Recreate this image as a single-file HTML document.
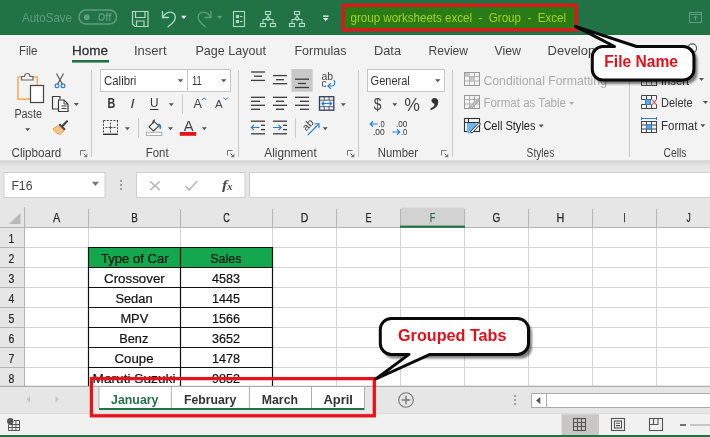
<!DOCTYPE html>
<html lang="en"><head><meta charset="utf-8"><title>group worksheets excel - Group - Excel</title>
<style>
html,body{margin:0;padding:0;background:#fff;}
body{width:710px;height:437px;overflow:hidden;font-family:"Liberation Sans", sans-serif;}
#app{position:relative;width:710px;height:437px;overflow:hidden;background:#fff;}
#app>div{position:absolute;left:0;width:710px;}
#titlebar{top:0;height:35px;background:#217346;}
#ribbon{top:35px;height:126px;background:#f3f3f3;}
#fbar{top:161px;height:47px;background:#e6e6e6;}
#grid{top:208px;height:180px;background:#fff;}
#tabs{top:388px;height:24px;background:#e6e6e6;}
#status{top:412px;height:25px;background:#f3f3f3;}
svg{position:absolute;left:0;top:0;font-family:"Liberation Sans", sans-serif;will-change:transform;}
</style></head><body>
<div id="app">
<div id="titlebar"></div><div id="ribbon"></div><div id="fbar"></div><div id="grid"></div><div id="tabs"></div><div id="status"></div>
<svg width="710" height="437" viewBox="0 0 710 437">
<defs><filter id="sh" x="-10%" y="-20%" width="120%" height="150%"><feGaussianBlur stdDeviation="1.3"/></filter><linearGradient id="rs" x1="0" y1="0" x2="0" y2="1"><stop offset="0" stop-color="#d2d2d2"/><stop offset="1" stop-color="#e6e6e6"/></linearGradient></defs>
<text x="22" y="22" font-size="13" fill="#5f9e7c" font-weight="normal" font-style="normal" textLength="50.0" lengthAdjust="spacingAndGlyphs" >AutoSave</text>
<rect x="79" y="10.100" width="37.600" height="14" rx="7" fill="none" stroke="#5f9e7c" stroke-width="1.500"/>
<circle cx="86.800" cy="17.200" r="3" fill="#5f9e7c"/>
<text x="98" y="21.3" font-size="10.5" fill="#5f9e7c" font-weight="bold" font-style="normal" textLength="13.4" lengthAdjust="spacingAndGlyphs" >Off</text>
<g fill="none" stroke="#afd9c0" stroke-width="1.2"><path d="M132.5 11.5h15.5v15h-13l-2.5-2.5z"/><path d="M135.5 11.5v6h9.5v-6"/><path d="M136.5 26.5v-5.500h7.5v5.5"/></g>
<g fill="none" stroke="#afd9c0" stroke-width="1.3" stroke-linecap="round"><path d="M162.5 11.5v6h6"/><path d="M162.8 17.2c2.500-4.500 7-6.200 10.200-4.200 3.800 2.400 2.800 7.300-1 10.500l-4 3.300"/></g>
<path d="M181 15.800h5.600l-2.800 3.200z" fill="#fff"/>
<g fill="none" stroke="#5f9e7c" stroke-width="1.3" stroke-linecap="round"><path d="M211 11.500v6h-6"/><path d="M210.700 17.200c-2.500-4.500-7-6.200-10.200-4.200-3.800 2.400-2.800 7.300 1 10.500l4 3.300"/></g>
<path d="M217 15.800h5.600l-2.800 3.200z" fill="#5f9e7c"/>
<g fill="none" stroke="#afd9c0" stroke-width="1.100"><rect x="233.500" y="11.500" width="11" height="15"/><rect x="236.500" y="15.500" width="2" height="2"/><rect x="236.500" y="20.500" width="2" height="2"/><path d="M240 16.500h2.500M240 21.500h2.500"/></g>
<g fill="none" stroke="#afd9c0" stroke-width="1.100" transform="translate(260 0)"><rect x="5.500" y="11.500" width="5" height="3"/><rect x="0.500" y="23.500" width="5" height="3"/><rect x="10.500" y="23.500" width="5" height="3"/><path d="M8 14.500v2.500M3 23.500v-4h10v4"/><path d="M8 16.500l2 2-2 2-2-2z"/></g>
<g fill="none" stroke="#afd9c0" stroke-width="1.100" transform="translate(289 0)"><rect x="5.500" y="11.500" width="5" height="3"/><rect x="0.500" y="23.500" width="5" height="3"/><rect x="10.500" y="23.500" width="5" height="3"/><path d="M8 14.500v2.500M3 23.500v-4h10v4"/><path d="M8 16.500l2 2-2 2-2-2z"/></g>
<path d="M323 15.500h5.500v1.200h-5.500zM323 18h5.500l-2.750 3z" fill="#fff"/>
<rect x="343.200" y="5.200" width="233" height="24.600" fill="#2a7b16" stroke="#e8121a" stroke-width="3.200"/>
<text x="350.5" y="22.3" font-size="13" fill="#a2d32a" font-weight="normal" font-style="normal" textLength="215.5" lengthAdjust="spacingAndGlyphs" xml:space="preserve" style="white-space:pre">group worksheets excel  -  Group  -  Excel</text>
<g fill="none" stroke="#5f9e7c" stroke-width="1"><rect x="689.500" y="12.500" width="12" height="10"/><path d="M689.500 14.500h12M695.500 16.500v4M693.500 18l2-2 2 2"/></g>
<text x="19" y="55" font-size="13.3" fill="#444" font-weight="normal" font-style="normal" textLength="18.5" lengthAdjust="spacingAndGlyphs" >File</text>
<text x="72" y="55" font-size="13.3" fill="#2e2e2e" font-weight="normal" font-style="normal" textLength="36.0" lengthAdjust="spacingAndGlyphs" stroke="#2e2e2e" stroke-width="0.280">Home</text>
<text x="134" y="55" font-size="13.3" fill="#444" font-weight="normal" font-style="normal" textLength="32.5" lengthAdjust="spacingAndGlyphs" >Insert</text>
<text x="195.5" y="55" font-size="13.3" fill="#444" font-weight="normal" font-style="normal" textLength="70.5" lengthAdjust="spacingAndGlyphs" >Page Layout</text>
<text x="294.5" y="55" font-size="13.3" fill="#444" font-weight="normal" font-style="normal" textLength="52.0" lengthAdjust="spacingAndGlyphs" >Formulas</text>
<text x="374" y="55" font-size="13.3" fill="#444" font-weight="normal" font-style="normal" textLength="27.0" lengthAdjust="spacingAndGlyphs" >Data</text>
<text x="428.5" y="55" font-size="13.3" fill="#444" font-weight="normal" font-style="normal" textLength="39.5" lengthAdjust="spacingAndGlyphs" >Review</text>
<text x="494.5" y="55" font-size="13.3" fill="#444" font-weight="normal" font-style="normal" textLength="26.5" lengthAdjust="spacingAndGlyphs" >View</text>
<text x="547.5" y="55" font-size="13.3" fill="#444" font-weight="normal" font-style="normal" textLength="59.3" lengthAdjust="spacingAndGlyphs" >Developer</text>
<rect x="72" y="60" width="37" height="2.600" fill="#217346"/>
<g fill="none" stroke="#555" stroke-width="1.100"><circle cx="692.300" cy="48.200" r="4.300"/><path d="M689.300 51.500l-3.500 4"/></g>
<path d="M91.5 70v87" stroke="#c8c8c8" stroke-width="1"/>
<path d="M238.5 70v87" stroke="#c8c8c8" stroke-width="1"/>
<path d="M358.5 70v87" stroke="#c8c8c8" stroke-width="1"/>
<path d="M452.5 70v87" stroke="#c8c8c8" stroke-width="1"/>
<path d="M629.5 70v87" stroke="#c8c8c8" stroke-width="1"/>
<text x="11.5" y="156.5" font-size="12" fill="#444" font-weight="normal" font-style="normal" textLength="49.8" lengthAdjust="spacingAndGlyphs" >Clipboard</text>
<text x="145.8" y="156.5" font-size="12" fill="#444" font-weight="normal" font-style="normal" textLength="22.8" lengthAdjust="spacingAndGlyphs" >Font</text>
<text x="264.3" y="156.5" font-size="12" fill="#444" font-weight="normal" font-style="normal" textLength="52.4" lengthAdjust="spacingAndGlyphs" >Alignment</text>
<text x="377.8" y="156.5" font-size="12" fill="#444" font-weight="normal" font-style="normal" textLength="40.2" lengthAdjust="spacingAndGlyphs" >Number</text>
<text x="526.6" y="156.5" font-size="12" fill="#444" font-weight="normal" font-style="normal" textLength="27.7" lengthAdjust="spacingAndGlyphs" >Styles</text>
<text x="663.4" y="156.5" font-size="12" fill="#444" font-weight="normal" font-style="normal" textLength="23.1" lengthAdjust="spacingAndGlyphs" >Cells</text>
<g fill="none" stroke="#777" stroke-width="1"><path d="M80.5 155.5v-5h5"/><path d="M83.5 153.5l3.500 3.500"/></g><path d="M87.3 153.7v3.600h-3.600z" fill="#777"/>
<g fill="none" stroke="#777" stroke-width="1"><path d="M227.5 155.5v-5h5"/><path d="M230.5 153.5l3.500 3.500"/></g><path d="M234.3 153.7v3.600h-3.600z" fill="#777"/>
<g fill="none" stroke="#777" stroke-width="1"><path d="M347.5 155.5v-5h5"/><path d="M350.5 153.5l3.500 3.500"/></g><path d="M354.3 153.7v3.600h-3.600z" fill="#777"/>
<g fill="none" stroke="#777" stroke-width="1"><path d="M441.5 155.5v-5h5"/><path d="M444.5 153.5l3.500 3.500"/></g><path d="M448.3 153.7v3.600h-3.600z" fill="#777"/>
<g fill="none" stroke-width="1.200"><path d="M30 99.200h-12v-22.200h4" stroke="#f0b463" stroke-width="1.700"/><path d="M33 77h4.300v8" stroke="#f0b463" stroke-width="1.700"/><path d="M21.500 80v-3.500h3c0-4 5.500-4 5.500 0h3v3.500z" stroke="#666" fill="#f3f3f3"/><rect x="30.500" y="85.500" width="13" height="17" fill="#fff" stroke="#444"/></g>
<text x="14.4" y="118" font-size="12" fill="#444" font-weight="normal" font-style="normal" textLength="27.6" lengthAdjust="spacingAndGlyphs" >Paste</text>
<path d="M25.2 128.3h5l-2.5 3z" fill="#555"/>
<g fill="none" stroke-width="1.200"><path d="M56.500 73.500l6 11M63.500 73.500l-6 11" stroke="#555"/><circle cx="57" cy="85.800" r="1.900" stroke="#2a7fd0"/><circle cx="63" cy="85.800" r="1.900" stroke="#2a7fd0"/></g>
<g fill="none" stroke="#3c3c3c" stroke-width="1.200"><path d="M58.500 109h-6v-12.500h7.500v3"/><path d="M58.500 100h5.500l4 4v7.500h-9.500z" fill="#f8f8f8"/><path d="M64 100v4h4" stroke-width="0.900"/><path d="M61.500 106h5M61.500 108.500h5" stroke-width="1"/></g>
<path d="M73.8 103h5l-2.5 3z" fill="#555"/>
<g stroke-width="1.200" fill="none"><path d="M67 121.300l-4.300 4.500" stroke="#444" stroke-width="2.200" stroke-linecap="round"/><path d="M59.300 124.300l5.700 5.400" stroke="#444" stroke-width="2"/><path d="M58 125.500l6 5.500-3.800 3.300c-3-0.300-5.800-2.300-7.200-5.500z" fill="#f4c58a" stroke="#ec9f45" stroke-width="1"/></g>
<rect x="100.500" y="69.500" width="87" height="22" fill="#fff" stroke="#c6c6c6"/><rect x="187.500" y="69.500" width="43" height="22" fill="#fff" stroke="#c6c6c6"/>
<text x="104" y="85" font-size="12" fill="#333" font-weight="normal" font-style="normal" textLength="32.4" lengthAdjust="spacingAndGlyphs" >Calibri</text>
<path d="M177.7 79.2h5.5l-2.75 3z" fill="#555"/>
<text x="192" y="85" font-size="12" fill="#333" font-weight="normal" font-style="normal" textLength="9.8" lengthAdjust="spacingAndGlyphs" >11</text>
<path d="M221 79.2h5.5l-2.75 3z" fill="#555"/>
<text x="107.5" y="107.8" font-size="14" fill="#333" font-weight="bold" font-style="normal" textLength="7.8" lengthAdjust="spacingAndGlyphs" >B</text>
<text x="130.5" y="107.5" font-size="13" fill="#333" font-weight="normal" font-style="italic" textLength="4.0" lengthAdjust="spacingAndGlyphs" >I</text>
<text x="150" y="107" font-size="12.5" fill="#333" font-weight="normal" font-style="normal" textLength="8.5" lengthAdjust="spacingAndGlyphs" >U</text>
<path d="M150 109.500h8.500" stroke="#333" stroke-width="1"/>
<path d="M168.8 103.3h5l-2.5 3z" fill="#555"/>
<path d="M182.500 95v19" stroke="#c8c8c8"/>
<text x="193.4" y="107.5" font-size="12.5" fill="#444" font-weight="normal" font-style="normal" textLength="8.4" lengthAdjust="spacingAndGlyphs" >A</text>
<path d="M201.800 100l2.300-2.300 2.300 2.300" fill="none" stroke="#2a7fd0" stroke-width="1"/>
<text x="215" y="107.5" font-size="10.5" fill="#444" font-weight="normal" font-style="normal" textLength="7.7" lengthAdjust="spacingAndGlyphs" >A</text>
<path d="M223.300 97.500l2.300 2.300 2.300-2.300" fill="none" stroke="#2a7fd0" stroke-width="1"/>
<g fill="none" stroke="#444" stroke-width="1" stroke-dasharray="2 1.300"><path d="M103.500 120.500h14.500M103.500 120.500v13M117.500 120.500v13"/></g><path d="M110.500 122.500v2M110.500 125.500v4M110.500 130.500v2M105.500 127.500h2M108.500 127.500h4M113.500 127.500h2" stroke="#555" stroke-width="1"/><path d="M103 134.300h15" stroke="#333" stroke-width="1.400"/>
<path d="M124.9 127.3h5l-2.5 3z" fill="#555"/>
<path d="M138.500 118v20" stroke="#c8c8c8"/>
<g fill="none" stroke-width="1.100"><path d="M149 127l5.200-5.400 4.500 4.300-5.100 5.100z" stroke="#444" fill="#fafafa"/><path d="M153.200 123.500c-1-2 0.500-3.800 1.800-3.300" stroke="#444"/><path d="M158.500 124c1.800 1 2.200 2.800 1.600 4.800" stroke="#2a7fd0" stroke-width="1.800"/></g><rect x="146.500" y="132.200" width="15.300" height="3.300" fill="#fff" stroke="#999" stroke-width="0.800"/>
<path d="M168 127.3h5l-2.5 3z" fill="#555"/>
<text x="183.8" y="130.5" font-size="15" fill="#444" font-weight="normal" font-style="normal" textLength="9.8" lengthAdjust="spacingAndGlyphs" >A</text>
<rect x="179.800" y="132" width="16.400" height="3.800" fill="#e8111a"/>
<path d="M201.8 127.3h5l-2.5 3z" fill="#555"/>
<path d="M251 72H265" stroke="#3c3c3c" stroke-width="1.3"/>
<path d="M254 76.2H262" stroke="#3c3c3c" stroke-width="1.3"/>
<path d="M251 80.4H265" stroke="#3c3c3c" stroke-width="1.3"/>
<path d="M273 75.6H287" stroke="#3c3c3c" stroke-width="1.3"/>
<path d="M276 79.7H284" stroke="#3c3c3c" stroke-width="1.3"/>
<path d="M273 83.7H287" stroke="#3c3c3c" stroke-width="1.3"/>
<rect x="291.500" y="69" width="21.200" height="22.700" fill="#c8c8c8"/>
<path d="M295 79.2H309" stroke="#3c3c3c" stroke-width="1.3"/>
<path d="M298 83.5H306" stroke="#3c3c3c" stroke-width="1.3"/>
<path d="M295 87.5H309" stroke="#3c3c3c" stroke-width="1.3"/>
<text x="321.4" y="79.8" font-size="10.5" fill="#444" font-weight="normal" font-style="normal" textLength="11.6" lengthAdjust="spacingAndGlyphs" >ab</text>
<text x="321.4" y="87" font-size="10.5" fill="#444" font-weight="normal" font-style="normal" textLength="5.1" lengthAdjust="spacingAndGlyphs" >c</text>
<g fill="none" stroke="#2a7fd0" stroke-width="1.200"><path d="M334 80c1.800 3 0.500 6-2.500 6h-3.500"/><path d="M330.800 83.200l-2.900 2.800 2.900 2.800"/></g>
<path d="M251 97.3H265" stroke="#3c3c3c" stroke-width="1.3"/>
<path d="M273 97.3H287" stroke="#3c3c3c" stroke-width="1.3"/>
<path d="M295 97.3H309" stroke="#3c3c3c" stroke-width="1.3"/>
<path d="M251 101.3H260" stroke="#3c3c3c" stroke-width="1.3"/>
<path d="M276 101.3H284" stroke="#3c3c3c" stroke-width="1.3"/>
<path d="M300 101.3H309" stroke="#3c3c3c" stroke-width="1.3"/>
<path d="M251 105.3H265" stroke="#3c3c3c" stroke-width="1.3"/>
<path d="M273 105.3H287" stroke="#3c3c3c" stroke-width="1.3"/>
<path d="M295 105.3H309" stroke="#3c3c3c" stroke-width="1.3"/>
<path d="M251 109.3H260" stroke="#3c3c3c" stroke-width="1.3"/>
<path d="M276 109.3H284" stroke="#3c3c3c" stroke-width="1.3"/>
<path d="M300 109.3H309" stroke="#3c3c3c" stroke-width="1.3"/>
<g fill="none"><rect x="319.500" y="96.700" width="14.300" height="13.500" stroke="#2f3f55" stroke-width="1.300"/><path d="M319.500 100.200h14.300M319.500 106.700h14.300M324.300 96.700v3.500M329 96.700v3.500M324.300 106.700v3.500M329 106.700v3.500" stroke="#2f3f55" stroke-width="0.800"/><path d="M322 103.500h9.500M324 101.500l-2 2 2 2M329.500 101.500l2 2-2 2" stroke="#2a7fd0" stroke-width="1.200"/></g>
<path d="M340.8 103.3h5l-2.5 3z" fill="#555"/>
<path d="M251 121.2H265" stroke="#3c3c3c" stroke-width="1.3"/>
<path d="M273 121.2H287" stroke="#3c3c3c" stroke-width="1.3"/>
<path d="M261 125.3H265" stroke="#3c3c3c" stroke-width="1.3"/>
<path d="M283 125.3H287" stroke="#3c3c3c" stroke-width="1.3"/>
<path d="M261 129.6H265" stroke="#3c3c3c" stroke-width="1.3"/>
<path d="M283 129.6H287" stroke="#3c3c3c" stroke-width="1.3"/>
<path d="M251 133.8H265" stroke="#3c3c3c" stroke-width="1.3"/>
<path d="M273 133.8H287" stroke="#3c3c3c" stroke-width="1.3"/>
<g fill="none" stroke="#2a7fd0" stroke-width="1.200"><path d="M251.300 127.500h8.200M254 124.800l-2.700 2.700 2.700 2.700"/><path d="M273 127.500h8.200M278.500 124.800l2.700 2.700-2.700 2.700"/></g>
<path d="M295.500 118v20" stroke="#c8c8c8"/>
<text x="0" y="0" font-size="10.500" fill="#444" transform="translate(306.200 131.500) rotate(-45)">ab</text>
<g fill="none" stroke="#2a7fd0" stroke-width="1.100"><path d="M307.800 135l11-11"/><path d="M314.500 123.700h4.500v4.500"/></g>
<path d="M322.7 127.3h5l-2.5 3z" fill="#555"/>
<rect x="367.500" y="69.500" width="77" height="22" fill="#fff" stroke="#c6c6c6"/>
<text x="370.6" y="85" font-size="12" fill="#333" font-weight="normal" font-style="normal" textLength="39.2" lengthAdjust="spacingAndGlyphs" >General</text>
<path d="M435 79.2h5.5l-2.75 3z" fill="#555"/>
<text x="373.7" y="110" font-size="17" fill="#444" font-weight="normal" font-style="normal" textLength="7.7" lengthAdjust="spacingAndGlyphs" >$</text>
<path d="M392.3 103.3h5l-2.5 3z" fill="#555"/>
<text x="404.3" y="110.5" font-size="18" fill="#444" font-weight="normal" font-style="normal" textLength="15.7" lengthAdjust="spacingAndGlyphs" >%</text>
<text x="430" y="104.2" font-size="39" fill="#333" font-weight="bold" font-style="normal" font-family="Liberation Serif, serif">,</text>
<text x="378.5" y="126.6" font-size="8.5" fill="#333" font-weight="normal" font-style="normal" textLength="6.3" lengthAdjust="spacingAndGlyphs" >.0</text>
<text x="373" y="134.7" font-size="8.5" fill="#333" font-weight="normal" font-style="normal" textLength="11.8" lengthAdjust="spacingAndGlyphs" >.00</text>
<g fill="none" stroke="#2a7fd0" stroke-width="1.200"><path d="M370.200 124h7.500M373 121.300l-2.800 2.700 2.800 2.700"/></g>
<text x="396" y="126.6" font-size="8.5" fill="#333" font-weight="normal" font-style="normal" textLength="11.3" lengthAdjust="spacingAndGlyphs" >.00</text>
<text x="401" y="134.7" font-size="8.5" fill="#333" font-weight="normal" font-style="normal" textLength="6.3" lengthAdjust="spacingAndGlyphs" >.0</text>
<g fill="none" stroke="#2a7fd0" stroke-width="1.200"><path d="M392.300 132h7.500M397 129.300l2.800 2.700-2.800 2.700"/></g>
<g fill="none" stroke="#999" stroke-width="1"><rect x="464.5" y="72.5" width="15" height="13"/><path d="M464.5 76.5h15M464.5 81h15M469.5 72.5v13M474.5 72.5v13" stroke-opacity="0.7"/></g>
<rect x="465" y="73" width="5" height="4" fill="#c4c4c4"/><rect x="470" y="77" width="5" height="4" fill="#c4c4c4"/>
<g fill="none" stroke="#999" stroke-width="1"><rect x="464.5" y="95.5" width="15" height="13"/><path d="M464.5 99.5h15M464.5 104h15M469.5 95.5v13M474.5 95.5v13" stroke-opacity="0.7"/></g>
<path d="M468.500 108l9.500-9.500 1.800 1.800-8.500 8.500z" fill="#bdbdbd" stroke="#999" stroke-width="0.700"/>
<g fill="none" stroke="#333" stroke-width="1.100"><rect x="464.500" y="118.500" width="15" height="13"/><path d="M464.500 122.500h15M468.500 118.500v13"/></g><path d="M467 123h9.500l-1 5.500-4 5h-3c-1.500-0.500-1.500-2-1.500-3z" fill="#6db6f2"/><path d="M470.500 131.500l8.500-9 1.500 1.500-8.500 9z" fill="#e8f2fb" stroke="#333" stroke-width="1"/>
<text x="483.4" y="84.5" font-size="12" fill="#ababab" font-weight="normal" font-style="normal" textLength="123.6" lengthAdjust="spacingAndGlyphs" >Conditional Formatting</text>
<text x="483.4" y="107" font-size="12" fill="#ababab" font-weight="normal" font-style="normal" textLength="82.6" lengthAdjust="spacingAndGlyphs" >Format as Table</text>
<path d="M569.2 102h5l-2.5 3z" fill="#ababab"/>
<text x="483.4" y="130" font-size="12" fill="#222" font-weight="normal" font-style="normal" textLength="52.1" lengthAdjust="spacingAndGlyphs" >Cell Styles</text>
<path d="M538.7 124.4h5l-2.5 3z" fill="#555"/>
<g fill="none" stroke="#444" stroke-width="1"><rect x="641.5" y="72.5" width="15" height="13"/><path d="M641.5 76.5h15M641.5 81h15M646.5 72.5v13M651.5 72.5v13" stroke-opacity="0.7"/></g>
<text x="661" y="84.5" font-size="12" fill="#333" font-weight="normal" font-style="normal" textLength="28.0" lengthAdjust="spacingAndGlyphs" >Insert</text>
<path d="M699 78h5l-2.5 3z" fill="#555"/>
<g fill="none" stroke="#444" stroke-width="1"><path d="M641.500 99.500v-4h15v4M641.500 104.500v4h15v-4M646.500 95.500v4M651.500 95.500v4M646.500 104.500v4M651.500 104.500v4M641.500 99.500h4M641.500 104.500h4"/><rect x="645.500" y="99.500" width="5" height="5" fill="#5aa7e6" stroke="#2a7fd0"/><path d="M652 99.500l4.500 5.500M656.500 99.500l-4.500 5.500" stroke="#e0452b" stroke-width="1.100"/></g>
<text x="661" y="107" font-size="12" fill="#333" font-weight="normal" font-style="normal" textLength="31.7" lengthAdjust="spacingAndGlyphs" >Delete</text>
<path d="M703 101h5l-2.5 3z" fill="#555"/>
<g fill="none" stroke="#444" stroke-width="1"><rect x="641.500" y="121.500" width="15" height="11"/><path d="M641.500 125h15M641.500 129h15M646.500 121.500v11M651.500 121.500v11"/><rect x="646.500" y="125" width="5" height="4" fill="#5aa7e6" stroke="#2a7fd0"/><path d="M641.500 118.500h15M641.500 117v3M656.500 117v3" stroke="#2a7fd0"/></g>
<text x="661" y="130" font-size="12" fill="#333" font-weight="normal" font-style="normal" textLength="36.4" lengthAdjust="spacingAndGlyphs" >Format</text>
<path d="M700.4 124.3h5l-2.5 3z" fill="#555"/>
<rect x="0" y="160.300" width="710" height="5.500" fill="url(#rs)"/>
<rect x="4" y="172.500" width="101" height="25" fill="#fff" stroke="#cfcfcf" stroke-width="1"/>
<text x="11.4" y="190" font-size="13" fill="#444" font-weight="normal" font-style="normal" textLength="21.1" lengthAdjust="spacingAndGlyphs" >F16</text>
<path d="M91.800 181.800h7.200l-3.600 4.200z" fill="#777"/>
<rect x="120.200" y="180" width="1.800" height="1.800" fill="#8e8e8e"/>
<rect x="120.200" y="184.1" width="1.800" height="1.800" fill="#8e8e8e"/>
<rect x="120.200" y="188.1" width="1.800" height="1.800" fill="#8e8e8e"/>
<rect x="136.500" y="172.500" width="108.500" height="25" fill="#fff" stroke="#cfcfcf" stroke-width="1"/>
<path d="M150.200 181.300l9.600 8.800M159.800 181.300l-9.600 8.800" stroke="#bcbcbc" stroke-width="1.700" fill="none"/>
<path d="M185.500 186.200l3.800 3.800 7.700-9" stroke="#bcbcbc" stroke-width="1.800" fill="none"/>
<text x="222" y="188.5" font-size="13.5" fill="#4a4a4a" font-weight="bold" font-style="italic" textLength="5.5" lengthAdjust="spacingAndGlyphs" font-family="Liberation Serif, serif">f</text>
<text x="227.3" y="189.5" font-size="9.5" fill="#4a4a4a" font-weight="bold" font-style="italic" textLength="5.3" lengthAdjust="spacingAndGlyphs" font-family="Liberation Serif, serif">x</text>
<rect x="249.500" y="172.500" width="470" height="25" fill="#fff" stroke="#cfcfcf" stroke-width="1"/>
<rect x="0" y="207" width="710" height="20.500" fill="#e6e6e6"/>
<rect x="0" y="207" width="24.500" height="179.500" fill="#e6e6e6"/>
<path d="M88.5 228V386" stroke="#d4d4d4" stroke-width="1"/>
<path d="M88.5 209V227" stroke="#b4b4b4" stroke-width="1"/>
<path d="M180.5 228V386" stroke="#d4d4d4" stroke-width="1"/>
<path d="M180.5 209V227" stroke="#b4b4b4" stroke-width="1"/>
<path d="M272.5 228V386" stroke="#d4d4d4" stroke-width="1"/>
<path d="M272.5 209V227" stroke="#b4b4b4" stroke-width="1"/>
<path d="M336.5 228V386" stroke="#d4d4d4" stroke-width="1"/>
<path d="M336.5 209V227" stroke="#b4b4b4" stroke-width="1"/>
<path d="M400.5 228V386" stroke="#d4d4d4" stroke-width="1"/>
<path d="M400.5 209V227" stroke="#b4b4b4" stroke-width="1"/>
<path d="M464.5 228V386" stroke="#d4d4d4" stroke-width="1"/>
<path d="M464.5 209V227" stroke="#b4b4b4" stroke-width="1"/>
<path d="M528.5 228V386" stroke="#d4d4d4" stroke-width="1"/>
<path d="M528.5 209V227" stroke="#b4b4b4" stroke-width="1"/>
<path d="M592.5 228V386" stroke="#d4d4d4" stroke-width="1"/>
<path d="M592.5 209V227" stroke="#b4b4b4" stroke-width="1"/>
<path d="M656.5 228V386" stroke="#d4d4d4" stroke-width="1"/>
<path d="M656.5 209V227" stroke="#b4b4b4" stroke-width="1"/>
<path d="M24.500 247.5H710" stroke="#d4d4d4" stroke-width="1"/>
<path d="M0 247.5H24.500" stroke="#b4b4b4" stroke-width="1"/>
<path d="M24.500 267.5H710" stroke="#d4d4d4" stroke-width="1"/>
<path d="M0 267.5H24.500" stroke="#b4b4b4" stroke-width="1"/>
<path d="M24.500 287.5H710" stroke="#d4d4d4" stroke-width="1"/>
<path d="M0 287.5H24.500" stroke="#b4b4b4" stroke-width="1"/>
<path d="M24.500 307.5H710" stroke="#d4d4d4" stroke-width="1"/>
<path d="M0 307.5H24.500" stroke="#b4b4b4" stroke-width="1"/>
<path d="M24.500 327.5H710" stroke="#d4d4d4" stroke-width="1"/>
<path d="M0 327.5H24.500" stroke="#b4b4b4" stroke-width="1"/>
<path d="M24.500 347.5H710" stroke="#d4d4d4" stroke-width="1"/>
<path d="M0 347.5H24.500" stroke="#b4b4b4" stroke-width="1"/>
<path d="M24.500 367.5H710" stroke="#d4d4d4" stroke-width="1"/>
<path d="M0 367.5H24.500" stroke="#b4b4b4" stroke-width="1"/>
<path d="M0 227.500H710" stroke="#b4b4b4" stroke-width="1"/>
<path d="M24.500 207V386" stroke="#b4b4b4" stroke-width="1"/>
<path d="M20.500 213v11h-11.500z" fill="#b8b8b8"/>
<rect x="401" y="207.500" width="63" height="18.500" fill="#d2d2d2"/><rect x="400" y="225.600" width="65" height="2.200" fill="#217346"/>
<text x="52.9" y="221.7" font-size="12.5" fill="#262626" font-weight="normal" font-style="normal" textLength="7.2" lengthAdjust="spacingAndGlyphs" stroke="#262626" stroke-width="0.250">A</text>
<text x="131.2" y="221.7" font-size="12.5" fill="#262626" font-weight="normal" font-style="normal" textLength="6.6" lengthAdjust="spacingAndGlyphs" stroke="#262626" stroke-width="0.250">B</text>
<text x="223.2" y="221.7" font-size="12.5" fill="#262626" font-weight="normal" font-style="normal" textLength="6.6" lengthAdjust="spacingAndGlyphs" stroke="#262626" stroke-width="0.250">C</text>
<text x="300.7" y="221.7" font-size="12.5" fill="#262626" font-weight="normal" font-style="normal" textLength="7.6" lengthAdjust="spacingAndGlyphs" stroke="#262626" stroke-width="0.250">D</text>
<text x="365.5" y="221.7" font-size="12.5" fill="#262626" font-weight="normal" font-style="normal" textLength="6.0" lengthAdjust="spacingAndGlyphs" stroke="#262626" stroke-width="0.250">E</text>
<text x="429.7" y="221.7" font-size="12.5" fill="#217346" font-weight="normal" font-style="normal" textLength="5.6" lengthAdjust="spacingAndGlyphs" stroke="#217346" stroke-width="0.250">F</text>
<text x="492.6" y="221.7" font-size="12.5" fill="#262626" font-weight="normal" font-style="normal" textLength="7.8" lengthAdjust="spacingAndGlyphs" stroke="#262626" stroke-width="0.250">G</text>
<text x="556.6" y="221.7" font-size="12.5" fill="#262626" font-weight="normal" font-style="normal" textLength="7.8" lengthAdjust="spacingAndGlyphs" stroke="#262626" stroke-width="0.250">H</text>
<text x="623.4" y="221.7" font-size="12.5" fill="#262626" font-weight="normal" font-style="normal" textLength="2.2" lengthAdjust="spacingAndGlyphs" stroke="#262626" stroke-width="0.250">I</text>
<text x="686.4" y="221.7" font-size="12.5" fill="#262626" font-weight="normal" font-style="normal" textLength="4.2" lengthAdjust="spacingAndGlyphs" stroke="#262626" stroke-width="0.250">J</text>
<text x="8.6" y="242.7" font-size="12.5" fill="#262626" font-weight="normal" font-style="normal" textLength="5.8" lengthAdjust="spacingAndGlyphs" stroke="#262626" stroke-width="0.200">1</text>
<text x="8.6" y="262.7" font-size="12.5" fill="#262626" font-weight="normal" font-style="normal" textLength="5.8" lengthAdjust="spacingAndGlyphs" stroke="#262626" stroke-width="0.200">2</text>
<text x="8.6" y="282.7" font-size="12.5" fill="#262626" font-weight="normal" font-style="normal" textLength="5.8" lengthAdjust="spacingAndGlyphs" stroke="#262626" stroke-width="0.200">3</text>
<text x="8.6" y="302.7" font-size="12.5" fill="#262626" font-weight="normal" font-style="normal" textLength="5.8" lengthAdjust="spacingAndGlyphs" stroke="#262626" stroke-width="0.200">4</text>
<text x="8.6" y="322.7" font-size="12.5" fill="#262626" font-weight="normal" font-style="normal" textLength="5.8" lengthAdjust="spacingAndGlyphs" stroke="#262626" stroke-width="0.200">5</text>
<text x="8.6" y="342.7" font-size="12.5" fill="#262626" font-weight="normal" font-style="normal" textLength="5.8" lengthAdjust="spacingAndGlyphs" stroke="#262626" stroke-width="0.200">6</text>
<text x="8.6" y="362.7" font-size="12.5" fill="#262626" font-weight="normal" font-style="normal" textLength="5.8" lengthAdjust="spacingAndGlyphs" stroke="#262626" stroke-width="0.200">7</text>
<text x="8.6" y="382.7" font-size="12.5" fill="#262626" font-weight="normal" font-style="normal" textLength="5.8" lengthAdjust="spacingAndGlyphs" stroke="#262626" stroke-width="0.200">8</text>
<rect x="88.500" y="247.500" width="184" height="20" fill="#14a84e"/>
<path d="M88 247.5H273" stroke="#111" stroke-width="1.100"/>
<path d="M88 267.5H273" stroke="#111" stroke-width="1.100"/>
<path d="M88 287.5H273" stroke="#111" stroke-width="1.100"/>
<path d="M88 307.5H273" stroke="#111" stroke-width="1.100"/>
<path d="M88 327.5H273" stroke="#111" stroke-width="1.100"/>
<path d="M88 347.5H273" stroke="#111" stroke-width="1.100"/>
<path d="M88 367.5H273" stroke="#111" stroke-width="1.100"/>
<path d="M88.5 247V386" stroke="#111" stroke-width="1.200"/>
<path d="M180.5 247V386" stroke="#111" stroke-width="1.200"/>
<path d="M272.5 247V386" stroke="#111" stroke-width="1.200"/>
<text x="100.9" y="262.5" font-size="12.5" fill="#111" font-weight="normal" font-style="normal" textLength="67.7" lengthAdjust="spacingAndGlyphs" stroke="#111" stroke-width="0.200">Type of Car</text>
<text x="210.3" y="262.5" font-size="12.5" fill="#111" font-weight="normal" font-style="normal" textLength="31.2" lengthAdjust="spacingAndGlyphs" stroke="#111" stroke-width="0.200">Sales</text>
<text x="104" y="282.5" font-size="12.5" fill="#111" font-weight="normal" font-style="normal" textLength="60.8" lengthAdjust="spacingAndGlyphs" stroke="#111" stroke-width="0.200">Crossover</text>
<text x="212" y="282.5" font-size="12.5" fill="#111" font-weight="normal" font-style="normal" textLength="28.0" lengthAdjust="spacingAndGlyphs" stroke="#111" stroke-width="0.200">4583</text>
<text x="115.4" y="302.5" font-size="12.5" fill="#111" font-weight="normal" font-style="normal" textLength="37.2" lengthAdjust="spacingAndGlyphs" stroke="#111" stroke-width="0.200">Sedan</text>
<text x="212" y="302.5" font-size="12.5" fill="#111" font-weight="normal" font-style="normal" textLength="28.0" lengthAdjust="spacingAndGlyphs" stroke="#111" stroke-width="0.200">1445</text>
<text x="120.4" y="322.5" font-size="12.5" fill="#111" font-weight="normal" font-style="normal" textLength="27.9" lengthAdjust="spacingAndGlyphs" stroke="#111" stroke-width="0.200">MPV</text>
<text x="212" y="322.5" font-size="12.5" fill="#111" font-weight="normal" font-style="normal" textLength="28.0" lengthAdjust="spacingAndGlyphs" stroke="#111" stroke-width="0.200">1566</text>
<text x="119.2" y="342.5" font-size="12.5" fill="#111" font-weight="normal" font-style="normal" textLength="29.1" lengthAdjust="spacingAndGlyphs" stroke="#111" stroke-width="0.200">Benz</text>
<text x="212" y="342.5" font-size="12.5" fill="#111" font-weight="normal" font-style="normal" textLength="28.0" lengthAdjust="spacingAndGlyphs" stroke="#111" stroke-width="0.200">3652</text>
<text x="114.5" y="362.5" font-size="12.5" fill="#111" font-weight="normal" font-style="normal" textLength="39.0" lengthAdjust="spacingAndGlyphs" stroke="#111" stroke-width="0.200">Coupe</text>
<text x="212" y="362.5" font-size="12.5" fill="#111" font-weight="normal" font-style="normal" textLength="28.0" lengthAdjust="spacingAndGlyphs" stroke="#111" stroke-width="0.200">1478</text>
<text x="92.5" y="382.5" font-size="12.5" fill="#111" font-weight="normal" font-style="normal" textLength="83.0" lengthAdjust="spacingAndGlyphs" stroke="#111" stroke-width="0.200">Maruti Suzuki</text>
<text x="212" y="382.5" font-size="12.5" fill="#111" font-weight="normal" font-style="normal" textLength="28.0" lengthAdjust="spacingAndGlyphs" stroke="#111" stroke-width="0.200">9852</text>
<rect x="0" y="386" width="710" height="28.500" fill="#e6e6e6"/>
<path d="M0 386.300H710" stroke="#9e9e9e"/><path d="M0 413.800H710" stroke="#d6d6d6"/>
<path d="M30 396v6.500l-3.500-3.250z" fill="#c4c4c4"/><path d="M55.500 396v6.500l3.500-3.250z" fill="#c4c4c4"/>
<rect x="99" y="387" width="265.500" height="21.500" fill="#fff"/>
<rect x="99" y="408" width="265.500" height="2" fill="#217346"/>
<path d="M99 387V408" stroke="#b0b0b0" stroke-width="1"/>
<path d="M171.3 387V408" stroke="#b0b0b0" stroke-width="1"/>
<path d="M249.4 387V408" stroke="#b0b0b0" stroke-width="1"/>
<path d="M311.5 387V408" stroke="#b0b0b0" stroke-width="1"/>
<path d="M364.5 387V408" stroke="#b0b0b0" stroke-width="1"/>
<text x="111" y="403.5" font-size="13.5" fill="#217346" font-weight="bold" font-style="normal" textLength="47.5" lengthAdjust="spacingAndGlyphs" >January</text>
<text x="184" y="403.5" font-size="13.5" fill="#333" font-weight="bold" font-style="normal" textLength="52.4" lengthAdjust="spacingAndGlyphs" >February</text>
<text x="261.8" y="403.5" font-size="13.5" fill="#333" font-weight="bold" font-style="normal" textLength="36.2" lengthAdjust="spacingAndGlyphs" >March</text>
<text x="323.4" y="403.5" font-size="13.5" fill="#333" font-weight="bold" font-style="normal" textLength="29.6" lengthAdjust="spacingAndGlyphs" >April</text>
<g fill="none" stroke="#777" stroke-width="1.100"><circle cx="406" cy="400" r="7.300"/><path d="M401.800 400h8.400M406 395.800v8.400" stroke-width="1.400"/></g>
<rect x="514.100" y="395" width="1.800" height="1.800" fill="#8e8e8e"/>
<rect x="514.100" y="399.1" width="1.800" height="1.800" fill="#8e8e8e"/>
<rect x="514.100" y="403.2" width="1.800" height="1.800" fill="#8e8e8e"/>
<rect x="531.500" y="393.500" width="190" height="14" fill="#fff" stroke="#ababab"/><path d="M546.500 393.500v14" stroke="#ababab"/><path d="M540.300 397v7l-4.300-3.500z" fill="#555"/>
<rect x="0" y="414" width="710" height="23" fill="#f1f1f1"/>
<rect x="561.500" y="414.300" width="37.500" height="20.700" fill="#c8c7c6"/>
<rect x="0" y="434" width="561" height="1" fill="#f9f9f9"/><rect x="0" y="435" width="710" height="2" fill="#217346"/>
<g fill="none" stroke="#555" stroke-width="1"><path d="M14 420.500h5.500v10h-11v-5.500"/><path d="M8.500 424.500h11M8.500 427.500h11M12.200 424.500v6M15.900 420.500v10"/></g><circle cx="10.300" cy="421.300" r="3.200" fill="#555"/>
<g fill="none" stroke="#555" stroke-width="1.100"><rect x="573.500" y="418.500" width="12" height="12"/><path d="M573.500 422.500h12M573.500 426.500h12M577.500 418.500v12M581.500 418.500v12"/></g>
<g fill="none" stroke="#555" stroke-width="1.100"><rect x="611.500" y="418.500" width="13" height="12"/><rect x="614.500" y="421" width="7" height="7"/><path d="M616 423.300h4M616 425.600h4"/></g>
<g fill="none" stroke="#555" stroke-width="1.100"><rect x="649.500" y="418.500" width="13" height="12"/><path d="M653.500 418.500v6M649.500 424.500h8.500v-6"/></g>
<path d="M680 425h6" stroke="#555" stroke-width="1.600"/><path d="M690 425h20" stroke="#999" stroke-width="1"/>
<rect x="594.8" y="49.5" width="102.60000000000002" height="34.5" rx="10.5" fill="#000" opacity="0.5" filter="url(#sh)"/>
<path d="M602.8 46.5H614.5L575.5 26.3L636.5 46.5H683.4A10.5 10.5 0 0 1 693.9 57.0V69.5A10.5 10.5 0 0 1 683.4 80H602.8A10.5 10.5 0 0 1 592.3 69.5V57.0A10.5 10.5 0 0 1 602.8 46.5Z" fill="#fff" stroke="#0a0a0a" stroke-width="3" stroke-linejoin="round"/>
<text x="604.3" y="67.4" font-size="16" fill="#e3101c" font-weight="bold" font-style="normal" textLength="73.7" lengthAdjust="spacingAndGlyphs" >File Name</text>
<rect x="91.400" y="378.600" width="282.900" height="37.200" fill="none" stroke="#e8121a" stroke-width="3.300"/>
<rect x="382.8" y="321.5" width="149.2" height="36.89999999999998" rx="11" fill="#000" opacity="0.5" filter="url(#sh)"/>
<path d="M391.3 318.5H517.5A11 11 0 0 1 528.5 329.5V343.4A11 11 0 0 1 517.5 354.4H430L375.8 379L409 354.4H391.3A11 11 0 0 1 380.3 343.4V329.5A11 11 0 0 1 391.3 318.5Z" fill="#fff" stroke="#0a0a0a" stroke-width="3" stroke-linejoin="round"/>
<text x="398" y="341.4" font-size="16" fill="#e3101c" font-weight="bold" font-style="normal" textLength="108.5" lengthAdjust="spacingAndGlyphs" >Grouped Tabs</text>
</svg>
</div>
</body></html>
